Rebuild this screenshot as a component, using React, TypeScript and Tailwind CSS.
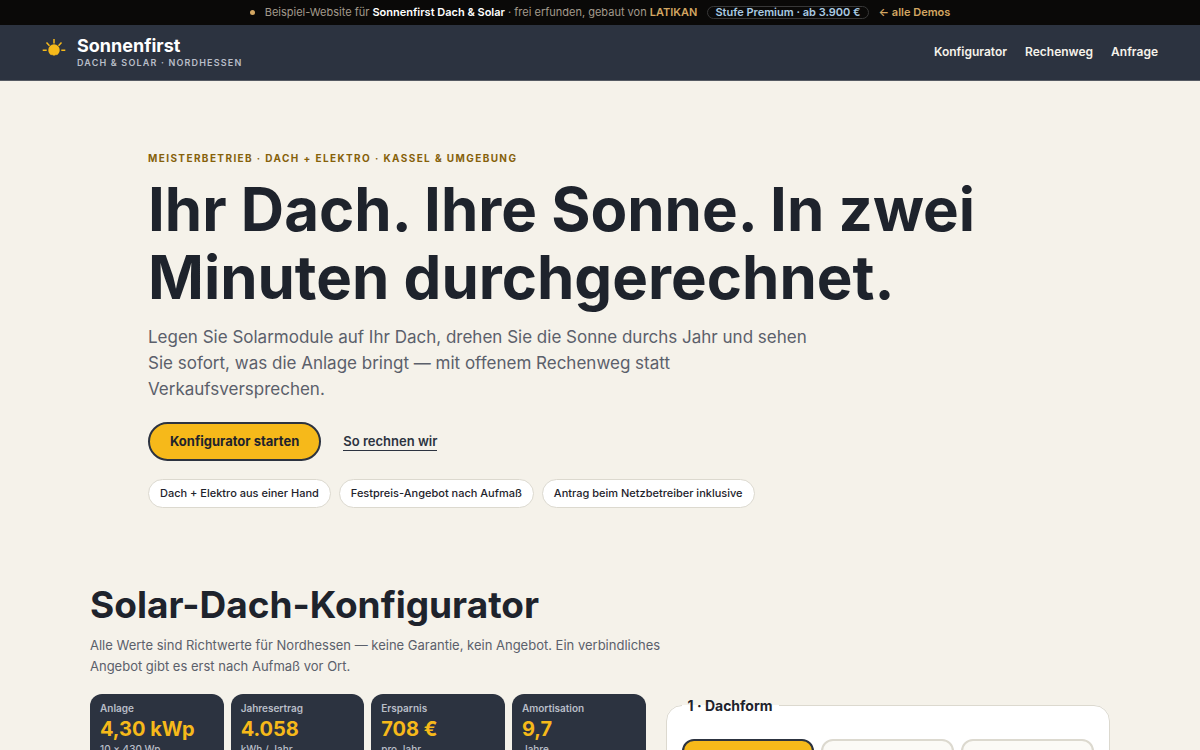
import React, { useState } from 'react';

const navLinks = [
  { href: '#konfigurator', label: 'Konfigurator' },
  { href: '#rechenweg', label: 'Rechenweg' },
  { href: '#anfrage', label: 'Anfrage' },
];

const promises = [
  'Dach + Elektro aus einer Hand',
  'Festpreis-Angebot nach Aufmaß',
  'Antrag beim Netzbetreiber inklusive',
];

const stats = [
  { label: 'Anlage', value: '4,30 kWp', note: '10 × 430 Wp' },
  { label: 'Jahresertrag', value: '4.058', note: 'kWh / Jahr' },
  { label: 'Ersparnis', value: '708 €', note: 'pro Jahr' },
  { label: 'Amortisation', value: '9,7', note: 'Jahre' },
];

const roofShapes = ['Satteldach', 'Pultdach', 'Flachdach'];

function SunLogo() {
  return (
    <svg viewBox="0 0 24 24" className="h-6 w-6" aria-hidden="true">
      <path
        d="M12 1v4.500M4.500 4.500l3 3.200M19.500 4.500l-3 3.200M.7 12.300h4M19.300 12.300h4"
        stroke="#f6b91a"
        strokeWidth="1.500"
        fill="none"
      />
      <path
        d="M6.300 12a5.700 5.700 0 1 1 11.400 0c0 2.300-1.200 4.200-2.900 5.200l-.8-.8-.9 1.200h-2.200l-.9-1.200-.8.8c-1.700-1-2.900-2.900-2.900-5.200z"
        fill="#f6b91a"
      />
    </svg>
  );
}

function DemoBar() {
  return (
    <div className="flex h-[25px] items-center justify-center bg-[#0a0908] text-[11px] text-[#a39a8c]">
      <span className="mr-2.5 h-[5px] w-[5px] rounded-full bg-[#d3a662]" />
      <p>
        Beispiel-Website für <strong className="font-semibold text-white">Sonnenfirst Dach &amp; Solar</strong> · frei
        erfunden, gebaut von{' '}
        <a href="#latikan" className="font-semibold text-[#d3a662]">
          LATIKAN
        </a>
      </p>
      <span className="mx-2.5 rounded-full border border-[#383838] px-[7px] leading-[11px] font-semibold text-[#a9cbe3]">
        Stufe Premium · ab 3.900 €
      </span>
      <a href="#demos" className="font-semibold text-[#d3a662]">
        ← alle Demos
      </a>
    </div>
  );
}

function Header() {
  return (
    <header className="flex h-14 items-center justify-between border-b border-[#555a63] bg-[#2c3340] px-[42px]">
      <a href="#top" className="flex items-center gap-[11px]">
        <span className="pb-1.5">
          <SunLogo />
        </span>
        <span className="flex flex-col">
          <span className="text-lg leading-5 font-bold text-white">Sonnenfirst</span>
          <span className="text-[9px] leading-[14px] font-semibold tracking-[0.13em] text-[#b9bec8] uppercase">
            Dach &amp; Solar · Nordhessen
          </span>
        </span>
      </a>
      <nav className="flex gap-[18px] pb-0.5 text-xs font-semibold text-[#f5f2ea]">
        {navLinks.map((link) => (
          <a key={link.href} href={link.href}>
            {link.label}
          </a>
        ))}
      </nav>
    </header>
  );
}

function Hero() {
  return (
    <section className="mx-auto max-w-[904px] pt-[70px]">
      <p className="text-[10px] leading-[14px] font-bold tracking-[0.14em] text-[#86610a] uppercase">
        Meisterbetrieb · Dach + Elektro · Kassel &amp; Umgebung
      </p>
      <h1 className="mt-2.5 text-[60px] leading-[68px] font-bold">
        Ihr Dach. Ihre Sonne. In zwei Minuten durchgerechnet.
      </h1>
      <p className="mt-[13px] max-w-[660px] text-[17px] leading-[26px] text-[#5b606b]">
        Legen Sie Solarmodule auf Ihr Dach, drehen Sie die Sonne durchs Jahr und sehen Sie sofort, was die Anlage bringt
        — mit offenem Rechenweg statt Verkaufsversprechen.
      </p>
      <div className="mt-5 flex items-center gap-[22px]">
        <button className="h-[39px] rounded-full border-2 border-[#2c3340] bg-[#f6b91a] px-5 pt-px text-[13px] font-bold">
          Konfigurator starten
        </button>
        <a href="#rechenweg" className="border-b border-[#2c3340] text-[13px] leading-[17px] font-semibold text-[#2c3340]">
          So rechnen wir
        </a>
      </div>
      <ul className="mt-[18px] flex flex-wrap gap-2">
        {promises.map((text) => (
          <li
            key={text}
            className="rounded-full border border-[#dcd9cf] bg-white px-[11px] text-[11px] leading-[27px] font-medium"
          >
            {text}
          </li>
        ))}
      </ul>
    </section>
  );
}

function Configurator() {
  const [shape, setShape] = useState(roofShapes[0]);

  return (
    <section id="konfigurator" className="mx-auto max-w-[1020px] pt-[74px] pb-20">
      <h2 className="text-[37px] leading-[46px] font-bold">Solar-Dach-Konfigurator</h2>
      <p className="mt-[7px] max-w-[600px] text-[13px] leading-[21px] text-[#5b606b]">
        Alle Werte sind Richtwerte für Nordhessen — keine Garantie, kein Angebot. Ein verbindliches Angebot gibt es erst
        nach Aufmaß vor Ort.
      </p>
      <div className="mt-[17px] grid grid-cols-[5fr_4fr] items-start gap-5">
        <dl className="grid grid-cols-4 gap-[7px]">
          {stats.map((stat) => (
            <div key={stat.label} className="rounded-xl bg-[#2c3340] px-2.5 py-2 text-[10px] text-[#b9bec8]">
              <dt className="leading-3 font-semibold">{stat.label}</dt>
              <dd className="mt-[3px] text-xl leading-6 font-bold text-[#f6b91a]">{stat.value}</dd>
              <dd className="mt-0.5 leading-3 font-medium">{stat.note}</dd>
            </div>
          ))}
        </dl>

        <fieldset className="rounded-2xl border border-[#dcd9cf] bg-white px-[15px] pt-[22px] pb-4">
          <legend className="px-1.5 text-sm leading-[23px] font-bold">1 · Dachform</legend>
          <div className="grid grid-cols-3 gap-[7px]">
            {roofShapes.map((name) => (
              <label
                key={name}
                className="flex h-20 cursor-pointer items-center justify-center rounded-xl border-2 border-[#dcd9cf] bg-[#fbfaf6] text-xs font-semibold has-checked:border-[#2c3340] has-checked:bg-[#f6b91a]"
              >
                <input
                  type="radio"
                  name="dachform"
                  className="sr-only"
                  checked={shape === name}
                  onChange={() => setShape(name)}
                />
                {name}
              </label>
            ))}
          </div>
        </fieldset>
      </div>
    </section>
  );
}

export default function App() {
  return (
    <div id="top" className="min-h-screen bg-[#f5f2ea] font-['Inter',sans-serif] text-[#1e232c]">
      <DemoBar />
      <Header />
      <main>
        <Hero />
        <Configurator />
      </main>
    </div>
  );
}
